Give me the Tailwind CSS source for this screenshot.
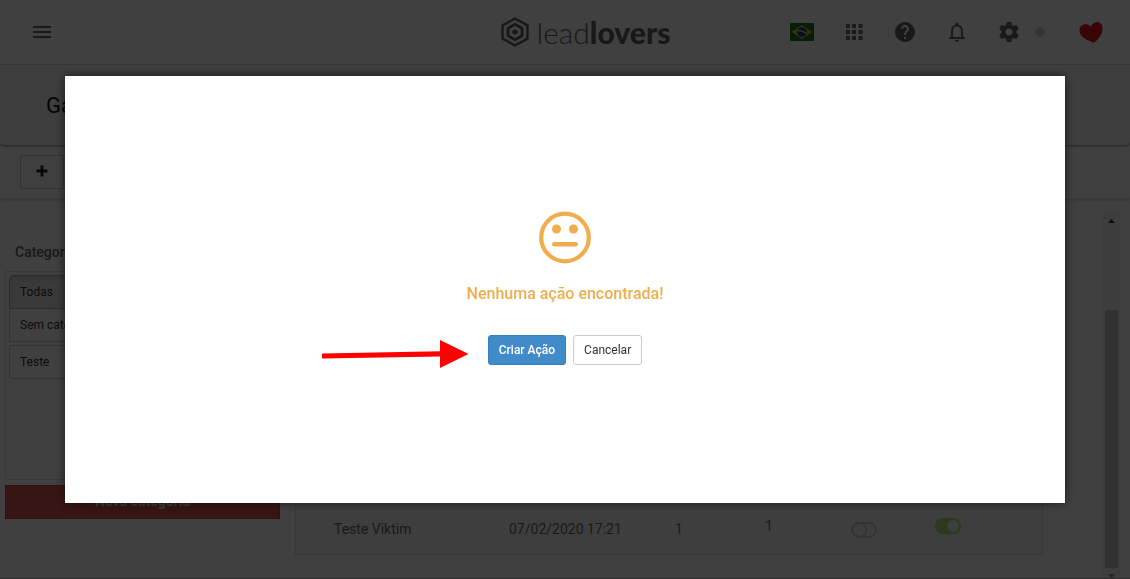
<!DOCTYPE html>
<html lang="pt-BR">
<head>
<meta charset="utf-8">
<meta name="viewport" content="width=device-width, initial-scale=1">
<title>leadlovers</title>
<script src="https://cdn.jsdelivr.net/npm/@tailwindcss/browser@4"></script>
</head>
<body class="bg-white font-['Roboto',sans-serif] text-sm text-[#666]">
<div class="flex h-screen min-h-[560px] flex-col overflow-hidden border-b border-[#c8aaaa]">
  <header class="grid h-[65px] shrink-0 grid-cols-[1fr_auto_1fr] items-center border-b border-[#e4e4e4] pr-[27px] pl-8">
    <button class="flex w-5 justify-center" aria-label="Menu">
      <svg class="h-3 w-[18px]" viewBox="0 0 18 12" fill="#666"><path d="M0 0h18v2H0zM0 5h18v2H0zM0 10h18v2H0z"/></svg>
    </button>
    <a href="#" class="ml-9 flex items-center gap-2 text-[#606060]" aria-label="leadlovers">
      <svg class="h-[30px] w-7" viewBox="0 0 28 30" fill="none" stroke="currentColor" stroke-linejoin="round">
        <path stroke-width="2.4" d="M14 1.5 26.5 8.4v13.2L14 28.5 1.5 21.600V8.400z"/>
        <path stroke-width="2.700" d="M14 7.300 21 11.200v7.600L14 22.700 7 18.800v-7.600z"/>
        <path fill="currentColor" stroke="none" d="m14 12 2.700 1.500v3L14 18l-2.700-1.500v-3z"/>
      </svg>
      <span class="font-['Lato',sans-serif] text-[30px] leading-8 font-light">lead<span class="font-black">lovers</span></span>
    </a>
    <nav class="flex items-center justify-end">
      <button class="mr-8" aria-label="Português">
        <svg class="h-[18px] w-6" viewBox="0 0 24 18"><path fill="#087a2d" d="M0 0h24v18H0z"/><path fill="#e8c400" d="m12 2 10.500 7L12 16 1.500 9z"/><circle cx="12" cy="9" r="4.800" fill="#24368f"/><path d="M7.500 7.700c3.500-.4 6.500.7 8.800 2.800" fill="none" stroke="#ddd" stroke-width="1.200"/></svg>
      </button>
      <button class="mr-[30px]" aria-label="Aplicativos">
        <svg class="h-4 w-[17px]" viewBox="0 0 17 16" fill="#666"><path d="M0 0h4v4H0zm6 0h4v4H6zm6.500 0h4v4h-4zM0 6h4v4H0zm6 0h4v4H6zm6.500 0h4v4h-4zM0 12h4v4H0zm6 0h4v4H6zm6.500 0h4v4h-4z"/></svg>
      </button>
      <button class="mr-7" aria-label="Ajuda">
        <svg class="size-6" viewBox="0 0 24 24" fill="#666"><path d="M12 2C6.480 2 2 6.480 2 12s4.480 10 10 10 10-4.480 10-10S17.520 2 12 2zm1 17h-2v-2h2v2zm2.070-7.750-.9.920C13.450 12.900 13 13.500 13 15h-2v-.5c0-1.100.45-2.100 1.170-2.830l1.240-1.260c.37-.36.590-.860.590-1.410 0-1.100-.9-2-2-2s-2 .9-2 2H8c0-2.210 1.790-4 4-4s4 1.790 4 4c0 .88-.36 1.680-.93 2.250z"/></svg>
      </button>
      <button class="mr-7" aria-label="Notificações">
        <svg class="size-6" viewBox="0 0 24 24" fill="#666"><path d="M12 22c1.100 0 2-.9 2-2h-4c0 1.100.9 2 2 2zm6-6v-5c0-3.070-1.630-5.640-4.500-6.320V4c0-.83-.67-1.500-1.500-1.500s-1.500.67-1.500 1.500v.68C7.640 5.360 6 7.920 6 11v5l-2 2v1h16v-1l-2-2zm-2 1H8v-6c0-2.480 1.510-4.500 4-4.500s4 2.020 4 4.500v6z"/></svg>
      </button>
      <button class="mr-3.5" aria-label="Configurações">
        <svg class="size-6" viewBox="0 0 24 24" fill="#666"><path d="M19.430 12.980c.04-.32.070-.64.070-.98s-.03-.66-.07-.98l2.110-1.650c.19-.15.240-.42.120-.64l-2-3.460c-.12-.22-.39-.3-.61-.22l-2.490 1c-.52-.4-1.080-.73-1.690-.98l-.38-2.650C14.460 2.180 14.250 2 14 2h-4c-.25 0-.46.180-.49.420l-.38 2.650c-.61.25-1.170.59-1.690.98l-2.490-1c-.23-.09-.49 0-.61.220l-2 3.460c-.13.220-.07.490.12.640l2.110 1.650c-.04.320-.07.650-.07.980s.03.660.07.980l-2.110 1.650c-.19.150-.24.420-.12.640l2 3.460c.12.220.39.300.61.220l2.490-1c.52.4 1.080.73 1.690.98l.38 2.650c.03.240.24.420.49.420h4c.25 0 .46-.18.490-.42l.38-2.650c.61-.25 1.170-.59 1.690-.98l2.490 1c.23.090.49 0 .61-.22l2-3.460c.12-.22.070-.49-.12-.64l-2.110-1.650zM12 15.500c-1.930 0-3.500-1.570-3.500-3.500s1.570-3.500 3.500-3.500 3.500 1.570 3.500 3.500-1.570 3.500-3.500 3.500z"/></svg>
      </button>
      <span class="mr-[34px] size-2.5 rounded-full bg-[#d0d0d0]"></span>
      <button aria-label="Favoritos">
        <svg class="h-[22px] w-6" viewBox="0 0 24 22" fill="#df1018"><path d="M13.800 21.400C9 19.500 3.500 17.600 1.200 12.600-1 7.500 2 3.300 6.600 3.300c2.200 0 3.700.8 5 2.400C13.200 2.800 15.800 1 18.500 1c3.800.300 5.500 3.600 5 7.700-.7 5.500-4.700 10.300-8 12.600-.5.300-1.200.300-1.700.100z"/></svg>
      </button>
    </nav>
  </header>

  <div class="bg-white">
    <div class="flex h-20 items-center rounded-b bg-[#f5f5f5] pt-0.5 pl-[46px] shadow-[0_1px_3px_rgba(0,0,0,0.5)]">
      <h1 class="text-[22px] leading-7 text-[#111]">Gatilhos</h1>
    </div>
    <div class="flex h-[54px] items-center border-b border-[#e8e8e8] pl-5 shadow-[0_1px_3px_rgba(0,0,0,0.2)]">
      <button class="flex h-[34px] w-11 items-center justify-center rounded-xs border border-[#ccc] pb-0.5" aria-label="Adicionar">
        <svg class="size-3" viewBox="0 0 12 12" fill="#222"><path d="M4.500.500h3v4h4v3h-4v4h-3v-4h-4v-3h4z"/></svg>
      </button>
    </div>
  </div>

  <main class="flex min-h-0 flex-1 pr-[10px] pl-[5px]">
    <aside class="mr-[15px] w-[275px] shrink-0 pt-[43px]">
      <h2 class="pl-2.5 leading-5 font-medium">Categorias</h2>
      <div class="mt-[9px] h-[209px] border border-[#ddd] p-[3px] text-xs text-[#333]">
        <button class="block h-[34px] w-full rounded-t-sm border border-[#adadad] bg-[#e6e6e6] px-2.5 text-left shadow-[inset_0_3px_5px_rgba(0,0,0,0.125)]">Todas</button>
        <button class="block h-[33px] w-full border border-t-0 border-[#ccc] px-2.5 text-left">Sem categoria</button>
        <button class="mt-[3px] block h-[34px] w-full rounded-b-sm border border-[#ccc] px-2.5 text-left">Teste</button>
      </div>
      <button class="mt-[5px] h-[34px] w-full border border-[#d43f3a] bg-[#d9534f] pb-0.5 font-bold text-white">Nova categoria</button>
    </aside>
    <section class="mr-[60px] mb-[23px] flex flex-1 items-end border border-[#ddd] bg-[#f7f7f7]">
      <table class="w-full table-fixed text-left">
        <colgroup><col class="w-[213px]"><col class="w-[166px]"><col class="w-[90px]"><col class="w-[86px]"><col class="w-[84px]"><col></colgroup>
        <tbody><tr class="h-[50px]">
          <td class="pl-[38px]">Teste Viktim</td>
          <td>07/02/2020 17:21</td>
          <td><a href="#" class="text-[#337ab7]">1</a></td>
          <td class="pb-1.5"><a href="#" class="text-[#337ab7]">1</a></td>
          <td class="pt-0.5"><label class="block"><input type="checkbox" class="sr-only" aria-label="Opção do gatilho"><svg class="h-4 w-[26px]" viewBox="0 0 26 16" fill="none" stroke="#c8c8c8" stroke-width="1.800"><rect x="1" y="1" width="24" height="14" rx="7"/><circle cx="8.500" cy="8" r="7"/></svg></label></td>
          <td class="pb-1.5"><label class="block"><input type="checkbox" checked class="sr-only" aria-label="Ativo"><svg class="h-4 w-[26px]" viewBox="0 0 26 16"><rect width="26" height="16" rx="8" fill="#b0dc70"/><circle cx="18" cy="8" r="6" fill="#f5f5f5"/></svg></label></td>
        </tr></tbody>
      </table>
    </section>
    <div class="mt-[13px] flex w-[17px] flex-col items-center justify-between bg-[#f4f4f4] pt-[7px]" aria-hidden="true">
      <svg class="h-1 w-[7px] shrink-0" viewBox="0 0 7 4"><path d="M3.500 0 7 4H0z" fill="#333"/></svg>
      <div class="mt-[87px] mb-1.5 w-[13px] flex-1 bg-[#c1c1c1]"></div>
      <svg class="h-1 w-[7px] shrink-0" viewBox="0 0 7 4"><path d="M0 0h7L3.500 4z" fill="#888"/></svg>
    </div>
  </main>
</div>

<div class="fixed inset-0 bg-black/75 px-[65px] pt-[76px]">
  <div role="dialog" aria-modal="true" aria-labelledby="msg" class="relative flex flex-col items-center bg-white pt-[135px] pb-[138px] shadow-[0_0_10px_rgba(0,0,0,0.6)]">
    <svg class="size-[54px]" viewBox="0 0 54 54" fill="#f0ad4e"><circle cx="27" cy="26.500" r="23.800" fill="none" stroke="#f0ad4e" stroke-width="4.200"/><circle cx="18.500" cy="18" r="4.500"/><circle cx="35.500" cy="18" r="4.500"/><rect x="14" y="31" width="26" height="4.400" rx="2.200"/></svg>
    <p id="msg" class="mt-[17px] text-base leading-6 font-medium text-[#f0ad4e]">Nenhuma ação encontrada!</p>
    <div class="mt-[29px] flex gap-[7px] text-xs">
      <button class="h-[30px] rounded-[3px] border border-[#357ebd] bg-[#428bca] px-2.5 font-medium text-white">Criar Ação</button>
      <button class="h-[30px] rounded-[3px] border border-[#ccc] bg-white px-2.5 text-[#333]">Cancelar</button>
    </div>
    <svg class="absolute top-[264px] right-1/2 mr-24 h-7 w-[147px]" viewBox="0 0 147 28" fill="#f00" aria-hidden="true"><path d="M0 13.500 118 11.300V0L146.500 14 118 28V16.500L0 18.500z"/></svg>
  </div>
</div>
</body>
</html>
